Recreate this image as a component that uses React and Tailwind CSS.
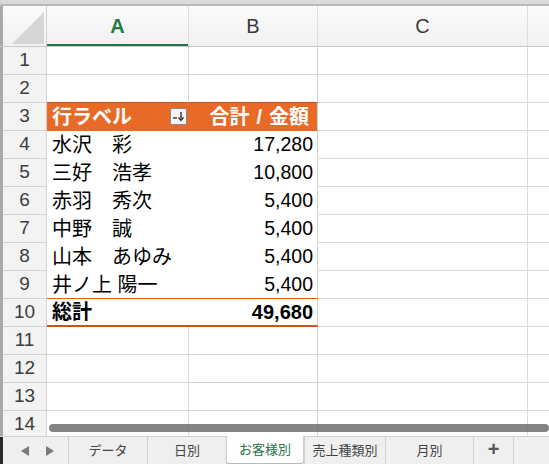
import React from 'react';

const font = "font-['Liberation_Sans','Noto_Sans_CJK_JP',sans-serif]";

const data = [
    { name: '水沢　彩', amount: '17,280' },
    { name: '三好　浩孝', amount: '10,800' },
    { name: '赤羽　秀次', amount: '5,400' },
    { name: '中野　誠', amount: '5,400' },
    { name: '山本　あゆみ', amount: '5,400' },
    { name: '井ノ上 陽一', amount: '5,400' },
];

const tabs = ['データ', '日別', 'お客様別', '売上種類別', '月別'];
const tabWidths = ['w-[79px]', 'w-[79px]', 'w-[78px]', 'w-[81px]', 'w-[88px]'];

// sorted dropdown button in the pivot header
const SortButton = () => (
    <div className="w-[17px] h-[17px] bg-[#f4f4f4] border border-[#8a8a8a] rounded-[2px] flex items-center justify-center">
        <svg width="13" height="13" viewBox="0 0 13 13">
            <line x1="1" y1="8" x2="5" y2="8" stroke="#333" strokeWidth="1.4" />
            <line x1="9" y1="2" x2="9" y2="10" stroke="#333" strokeWidth="1.4" />
            <path d="M6.5 7.5 L9 10.5 L11.5 7.5" fill="none" stroke="#333" strokeWidth="1.4" />
        </svg>
    </div>
);

const RowHead = ({ n }) => (
    <>
        <div className="w-[3px] h-full bg-[#a9a9a9]"></div>
        <div className="w-[44px] h-full bg-[#f3f3f3] border-r border-b border-[#d2d2d2] flex items-center justify-center text-[19px] text-[#3c3c3c]">
            {n}
        </div>
    </>
);

const EmptyRow = ({ n }) => (
    <div className="flex h-[28px]">
        <RowHead n={n} />
        <div className="w-[142px] h-full border-r border-b border-[#d9d9d9]"></div>
        <div className="w-[129px] h-full border-r border-b border-[#d2d2d2]"></div>
        <div className="w-[210px] h-full border-r border-b border-[#d9d9d9]"></div>
        <div className="flex-1 h-full border-b border-[#d9d9d9]"></div>
    </div>
);

const App = () => {
    return (
        <div className={`w-[549px] h-[464px] relative overflow-hidden bg-white flex flex-col ${font}`}>
            {/* window top edge */}
            <div className="h-[4px] bg-[#dadada] shrink-0"></div>
            <div className="h-[2px] bg-[#b9b9b9] shrink-0"></div>

            <div className="flex-1 overflow-hidden">
                {/* column headers */}
                <div className="flex h-[41px] bg-gradient-to-b from-[#fbfbfb] to-[#f1f1f1] border-b border-[#c9c9c9]">
                    <div className="w-[3px] h-full bg-[#a9a9a9]"></div>
                    <div className="w-[44px] h-full border-r border-[#d2d2d2] relative">
                        <svg className="absolute left-[8px] top-[5px]" width="34" height="34" viewBox="0 0 34 34">
                            <polygon points="33,1 33,33 1,33" fill="#d6d6d6" />
                        </svg>
                    </div>
                    <div className="w-[142px] h-full border-r border-[#dedede] flex items-center justify-center text-[20px] font-bold text-[#1e7a3e] relative">
                        A
                        <div className="absolute left-0 right-0 bottom-0 h-[2px] bg-[#217346]"></div>
                    </div>
                    <div className="w-[129px] h-full border-r border-[#dedede] flex items-center justify-center text-[20px] text-[#3a3a3a]">
                        B
                    </div>
                    <div className="w-[210px] h-full border-r border-[#dedede] flex items-center justify-center text-[20px] text-[#3a3a3a]">
                        C
                    </div>
                    <div className="flex-1 h-full"></div>
                </div>

                <EmptyRow n={1} />
                <div className="flex h-[28px]">
                    <RowHead n={2} />
                    <div className="w-[142px] h-full border-r border-b border-r-[#d9d9d9] border-b-[#c2561b]"></div>
                    <div className="w-[129px] h-full border-r border-b border-r-[#d2d2d2] border-b-[#c2561b]"></div>
                    <div className="w-[210px] h-full border-r border-b border-[#d9d9d9]"></div>
                    <div className="flex-1 h-full border-b border-[#d9d9d9]"></div>
                </div>

                {/* pivot header */}
                <div className="flex h-[28px]">
                    <RowHead n={3} />
                    <div className="w-[142px] h-full bg-[#e96a27] border-b border-[#e96a27] flex items-center justify-between pl-[5px] pr-[2px] text-[20px] font-bold text-white">
                        <span>行ラベル</span>
                        <SortButton />
                    </div>
                    <div className="w-[129px] h-full bg-[#e96a27] border-r border-b border-r-[#d2d2d2] border-b-[#e96a27] flex items-center justify-end pr-[8px] text-[20px] font-bold text-white whitespace-nowrap">
                        <span>合計<span className="mx-[7px]">/</span>金額</span>
                    </div>
                    <div className="w-[210px] h-full border-r border-b border-[#d9d9d9]"></div>
                    <div className="flex-1 h-full border-b border-[#d9d9d9]"></div>
                </div>

                {data.map((row, i) => {
                    const last = i === data.length - 1;
                    return (
                        <div key={row.name} className="flex h-[28px]">
                            <RowHead n={i + 4} />
                            <div className={`w-[142px] h-full border-b ${last ? 'border-[#d0601f]' : 'border-white'} flex items-center pl-[5px] text-[20px] text-black whitespace-nowrap`}>
                                {row.name}
                            </div>
                            <div className={`w-[129px] h-full border-r border-b border-r-[#d2d2d2] ${last ? 'border-b-[#d0601f]' : 'border-b-white'} flex items-center justify-end pr-[4px] text-[19.5px] text-black`}>
                                {row.amount}
                            </div>
                            <div className="w-[210px] h-full border-r border-b border-[#d9d9d9]"></div>
                            <div className="flex-1 h-full border-b border-[#d9d9d9]"></div>
                        </div>
                    );
                })}

                {/* grand total */}
                <div className="flex h-[28px]">
                    <RowHead n={10} />
                    <div className="w-[142px] h-full border-b-2 border-[#c4561b] flex items-center pl-[5px] text-[20px] font-bold text-black">
                        総計
                    </div>
                    <div className="w-[129px] h-full border-r border-b-2 border-r-[#d2d2d2] border-b-[#c4561b] flex items-center justify-end pr-[4px] text-[20px] font-bold text-black">
                        49,680
                    </div>
                    <div className="w-[210px] h-full border-r border-b border-[#d9d9d9]"></div>
                    <div className="flex-1 h-full border-b border-[#d9d9d9]"></div>
                </div>

                {[11, 12, 13, 14].map((n) => (
                    <EmptyRow key={n} n={n} />
                ))}
            </div>

            {/* horizontal scrollbar overlay */}
            <div className="absolute top-[424px] left-[49px] right-0 h-[8px] rounded-full bg-[#6f6f6f]/85"></div>

            {/* sheet tabs */}
            <div className="h-[28px] shrink-0 flex bg-[#efefef] border-t border-[#d4d4d4] text-[13px] text-[#444]">
                <div className="w-[3px] h-full bg-[#2a2a2a]"></div>
                <div className="w-[65px] h-full flex items-center pl-[17px] gap-[15px] text-[#7a7a7a]">
                    <svg width="10" height="12" viewBox="0 0 10 12"><polygon points="9,1 9,11 1,6" fill="#7a7a7a" /></svg>
                    <svg width="10" height="12" viewBox="0 0 10 12"><polygon points="1,1 1,11 9,6" fill="#7a7a7a" /></svg>
                </div>
                {tabs.map((t, i) => {
                    const active = t === 'お客様別';
                    return (
                        <div
                            key={t}
                            className={`${tabWidths[i]} h-full flex items-center justify-center border-l border-[#cfcfcf] ${active ? 'bg-white text-[#217346] -mt-px h-[26px] rounded-b-[3px] shadow-[0_1px_1px_rgba(0,0,0,0.25)] border-r' : ''}`}
                        >
                            {t}
                        </div>
                    );
                })}
                <div className="w-[41px] h-full border-l border-r border-[#cfcfcf] flex items-center justify-center text-[20px] font-bold text-[#555] pb-[3px]">
                    +
                </div>
                <div className="flex-1"></div>
            </div>
        </div>
    );
};

export default App;
